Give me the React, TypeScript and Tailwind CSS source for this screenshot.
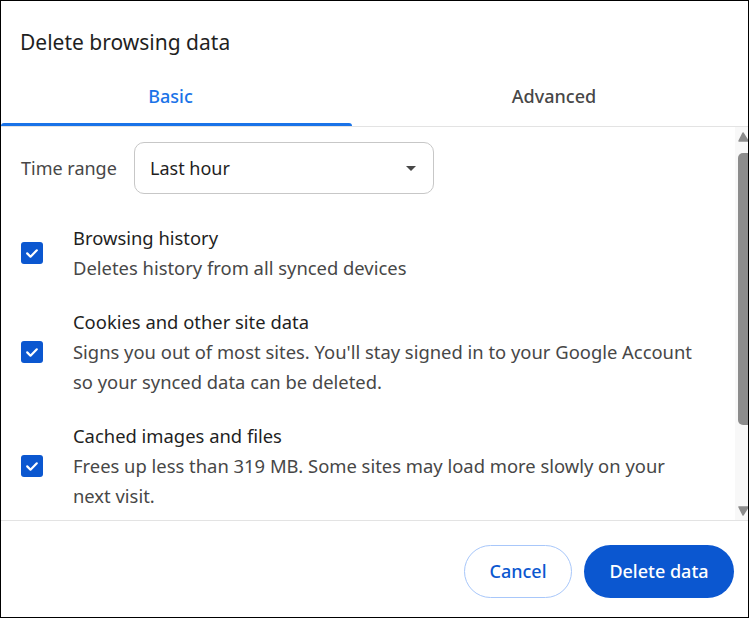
import { useState } from "react";

const items = [
  {
    title: "Browsing history",
    lines: ["Deletes history from all synced devices"],
  },
  {
    title: "Cookies and other site data",
    lines: [
      "Signs you out of most sites. You'll stay signed in to your Google Account",
      "so your synced data can be deleted.",
    ],
  },
  {
    title: "Cached images and files",
    lines: [
      "Frees up less than 319 MB. Some sites may load more slowly on your",
      "next visit.",
    ],
  },
];

function Checkbox({ checked }: { checked: boolean }) {
  return (
    <div
      className={
        checked
          ? "w-[22px] h-[22px] rounded-[3px] bg-[#0b57d0] flex items-center justify-center shrink-0"
          : "w-[22px] h-[22px] rounded-[3px] border-2 border-[#474747] shrink-0"
      }
    >
      {checked && (
        <svg width="22" height="22" viewBox="0 0 22 22">
          <path d="M6.2 11.4l3.3 3.3 6.3-6.4" fill="none" stroke="#fff" strokeWidth="2.2" strokeLinecap="round" strokeLinejoin="round" />
        </svg>
      )}
    </div>
  );
}

export default function App() {
  const [tab, setTab] = useState("basic");
  const [checked, setChecked] = useState([true, true, true]);

  return (
    <div className="w-[749px] h-[618px] border border-black bg-white flex flex-col overflow-hidden font-['Noto_Sans','Liberation_Sans',sans-serif]">
      <h1 className="h-[69px] pt-[27px] pl-[19px] text-[21px] leading-[28px] text-[#1f1f1f]">
        Delete browsing data
      </h1>

      <div className="flex h-[57px] border-b border-[#e3e3e3]">
        <button className="w-[351px] flex flex-col" onClick={() => setTab("basic")}>
          <span
            className={
              tab === "basic"
                ? "flex-1 flex items-center justify-center pr-[12px] text-[18px] font-medium text-[#1a73e8]"
                : "flex-1 flex items-center justify-center pr-[12px] text-[18px] font-medium text-[#474747]"
            }
          >
            Basic
          </span>
          <span className={tab === "basic" ? "h-[3px] bg-[#1a73e8] rounded-t-[3px]" : "h-[3px]"} />
        </button>
        <button className="flex-1 flex flex-col pl-2" onClick={() => setTab("advanced")}>
          <span
            className={
              tab === "advanced"
                ? "flex-1 flex items-center justify-center text-[18px] font-medium text-[#1a73e8]"
                : "flex-1 flex items-center justify-center text-[18px] font-medium text-[#474747]"
            }
          >
            Advanced
          </span>
          <span className={tab === "advanced" ? "h-[3px] bg-[#1a73e8] rounded-t-[3px]" : "h-[3px]"} />
        </button>
      </div>

      <div className="flex h-[394px] border-b border-[#e3e3e3]">
        <div className="flex-1 overflow-hidden pl-[20px] pt-[15px]">
          <div className="flex items-center">
            <span className="w-[113px] text-[18px] text-[#474747]">Time range</span>
            <div className="w-[300px] h-[52px] border border-[#c7c7c7] rounded-[10px] flex items-center justify-between pl-[15px] pr-[17px]">
              <span className="text-[18px] text-[#1f1f1f]">Last hour</span>
              <svg width="10" height="5" viewBox="0 0 10 5">
                <polygon points="0,0 10,0 5,5" fill="#474747" />
              </svg>
            </div>
          </div>

          <div className="flex flex-col gap-[24px] mt-[29px]">
            {items.map((item, i) => (
              <div
                key={item.title}
                className="flex items-center gap-[30px] cursor-pointer"
                onClick={() => setChecked(checked.map((c, j) => (j === i ? !c : c)))}
              >
                <Checkbox checked={checked[i]} />
                <div className="text-[18.4px] leading-[30px] whitespace-nowrap">
                  <div className="text-[#1f1f1f]">{item.title}</div>
                  {item.lines.map((line) => (
                    <div key={line} className="text-[#474747]">
                      {line}
                    </div>
                  ))}
                </div>
              </div>
            ))}
          </div>
        </div>

        <div className="w-[13px] bg-[#f8f8f8] flex flex-col items-end pt-[5px] pb-[4px]">
          <svg width="10" height="10" viewBox="0 0 10 10">
            <path d="M5 1 L10 9 L1 9 Z" fill="#8c8c8c" stroke="#8c8c8c" strokeWidth="1.5" strokeLinejoin="round" />
          </svg>
          <div className="mt-[11px] h-[272px] w-[10px] bg-[#8c8c8c] rounded-l-[5px]" />
          <div className="flex-1" />
          <svg width="10" height="10" viewBox="0 0 10 10">
            <path d="M1 1 L10 1 L5 9 Z" fill="#8c8c8c" stroke="#8c8c8c" strokeWidth="1.5" strokeLinejoin="round" />
          </svg>
        </div>
      </div>

      <div className="h-[96px] flex justify-end items-start gap-[12px] pt-[24px] pr-[14px]">
        <button className="w-[108px] h-[53px] rounded-full border border-[#a8c7fa] text-[18px] font-medium text-[#0b57d0]">
          Cancel
        </button>
        <button className="w-[150px] h-[53px] rounded-full bg-[#0b57d0] text-[18px] font-medium text-white">
          Delete data
        </button>
      </div>
    </div>
  );
}
